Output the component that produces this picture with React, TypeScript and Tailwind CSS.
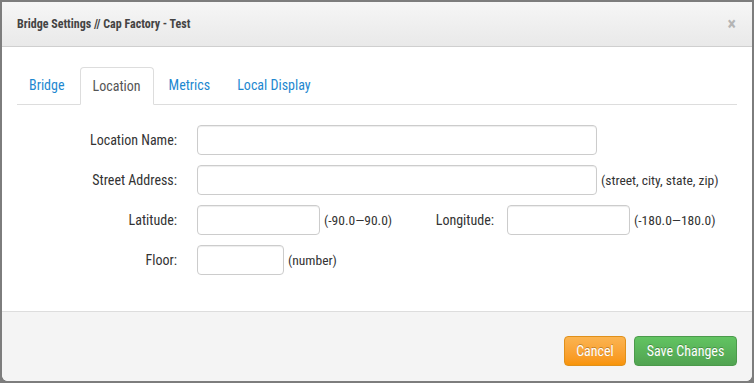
import React from 'react';

const font = { fontFamily: '"Roboto Condensed", "Liberation Sans Narrow", "DejaVu Sans Condensed", Roboto, sans-serif' };

const tabs = ['Bridge', 'Location', 'Metrics', 'Local Display'];

const inputCls =
  'h-[30px] rounded-[4px] border border-[#cccccc] bg-white shadow-[inset_0_1px_1px_rgba(0,0,0,0.075)] outline-none';

const Label: React.FC<{ children: React.ReactNode; w?: string }> = ({ children, w = 'w-[160px]' }) => (
  <div className={`${w} shrink-0 text-right text-[14px] text-[#333]`}>{children}</div>
);

const Help: React.FC<{ children: React.ReactNode }> = ({ children }) => (
  <span className="ml-[4px] text-[13.5px] text-[#333]">{children}</span>
);

export default function App() {
  return (
    <div className="w-[754px] h-[383px] bg-[#7d7d7d] pl-[2px] pt-[2px]" style={font}>
      <div className="w-[750px] h-[379px] flex flex-col bg-white rounded-b-[6px] overflow-hidden">
        {/* header */}
        <div className="h-[45px] shrink-0 flex items-center justify-between px-[15px] bg-gradient-to-b from-[#f6f6f6] to-[#e9e9e9] border-b border-[#cfcfcf]">
          <h3 className="text-[12px] font-bold text-[#444]">Bridge Settings // Cap Factory - Test</h3>
          <button className="text-[18px] leading-none font-bold text-[#b5b5b5] mr-[1px]">×</button>
        </div>

        {/* body */}
        <div className="flex-1 px-[15px] pt-[20px]">
          <ul className="flex border-b border-[#dddddd] h-[38px]">
            {tabs.map(t =>
              t === 'Location' ? (
                <li
                  key={t}
                  className="mr-[3px] -mb-px px-[12px] flex items-center h-[38px] bg-white border border-[#dddddd] border-b-white rounded-t-[4px] text-[14px] text-[#555]"
                >
                  {t}
                </li>
              ) : (
                <li key={t} className="mr-[3px] px-[12px] flex items-center h-[37px] text-[14px] text-[#1e88d0]">
                  {t}
                </li>
              )
            )}
          </ul>

          <div className="mt-[20px] flex flex-col gap-[10px]">
            <div className="flex items-center">
              <Label>Location Name:</Label>
              <input className={`${inputCls} ml-[20px] w-[400px]`} />
            </div>
            <div className="flex items-center">
              <Label>Street Address:</Label>
              <input className={`${inputCls} ml-[20px] w-[400px]`} />
              <Help>(street, city, state, zip)</Help>
            </div>
            <div className="flex items-center">
              <Label>Latitude:</Label>
              <input className={`${inputCls} ml-[20px] w-[123px]`} />
              <span className="w-[73px] shrink-0 ml-[4px] text-[13.5px] text-[#333]">(-90.0—90.0)</span>
              <Label w="w-[97px]">Longitude:</Label>
              <input className={`${inputCls} ml-[13px] w-[123px]`} />
              <Help>(-180.0—180.0)</Help>
            </div>
            <div className="flex items-center">
              <Label>Floor:</Label>
              <input className={`${inputCls} ml-[20px] w-[87px]`} />
              <Help>(number)</Help>
            </div>
          </div>
        </div>

        {/* footer */}
        <div className="h-[70px] shrink-0 flex items-start justify-end gap-[8px] px-[15px] pt-[24px] bg-[#f4f4f4] border-t border-[#dddddd]">
          <button className="h-[30px] w-[62px] rounded-[4px] border border-[#e0901a] bg-gradient-to-b from-[#fbb450] to-[#f89406] text-[14px] text-white [text-shadow:0_-1px_0_rgba(0,0,0,0.25)]">
            Cancel
          </button>
          <button className="h-[30px] w-[103px] rounded-[4px] border border-[#4b9a4b] bg-gradient-to-b from-[#62c462] to-[#51a351] text-[14px] text-white [text-shadow:0_-1px_0_rgba(0,0,0,0.25)]">
            Save Changes
          </button>
        </div>
      </div>
    </div>
  );
}
